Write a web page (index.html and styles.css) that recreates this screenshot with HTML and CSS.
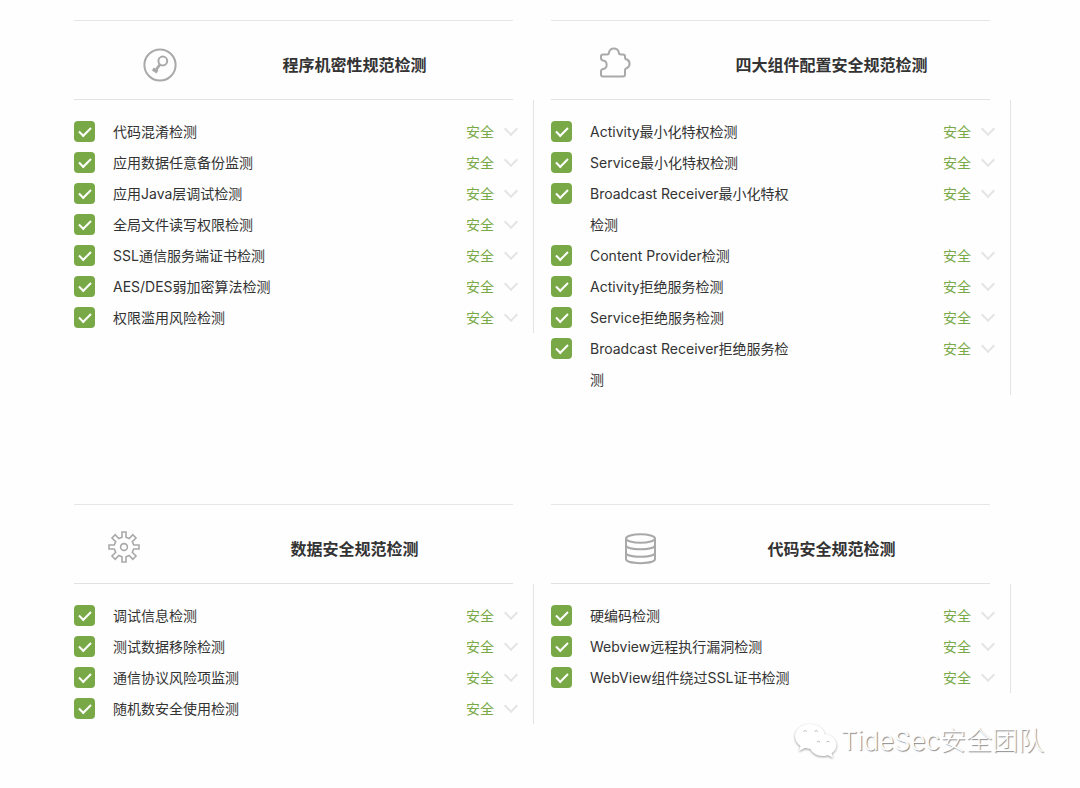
FILE: index.html
```html
<!DOCTYPE html>
<html lang="zh-CN">
<head>
<meta charset="utf-8">
<meta name="viewport" content="width=device-width, initial-scale=1">
<title>安全检测</title>
<link rel="stylesheet" href="styles.css">
</head>
<body>
<main class="report">
  <section class="panel">
    <header class="panel-head">
      <div class="icon-cell icon-cell-key">
        <svg class="icon" viewBox="0 0 34 34" aria-hidden="true">
          <circle cx="17" cy="17" r="15.6"/>
          <circle cx="19.800" cy="13" r="4.400"/>
          <path d="M17 16.500 12.500 22.500" stroke-width="2.800"/>
          <path d="M9.800 21 14.500 24" stroke-width="3.600"/>
        </svg>
      </div>
      <h2 class="title">程序机密性规范检测</h2>
    </header>
    <ul class="checks">
      <li class="check"><input class="box" type="checkbox" id="a1" checked><label class="name" for="a1">代码混淆检测</label><span class="status">安全</span><button class="toggle" type="button" aria-label="展开"></button></li>
      <li class="check"><input class="box" type="checkbox" id="a2" checked><label class="name" for="a2">应用数据任意备份监测</label><span class="status">安全</span><button class="toggle" type="button" aria-label="展开"></button></li>
      <li class="check"><input class="box" type="checkbox" id="a3" checked><label class="name" for="a3">应用Java层调试检测</label><span class="status">安全</span><button class="toggle" type="button" aria-label="展开"></button></li>
      <li class="check"><input class="box" type="checkbox" id="a4" checked><label class="name" for="a4">全局文件读写权限检测</label><span class="status">安全</span><button class="toggle" type="button" aria-label="展开"></button></li>
      <li class="check"><input class="box" type="checkbox" id="a5" checked><label class="name" for="a5">SSL通信服务端证书检测</label><span class="status">安全</span><button class="toggle" type="button" aria-label="展开"></button></li>
      <li class="check"><input class="box" type="checkbox" id="a6" checked><label class="name" for="a6">AES/DES弱加密算法检测</label><span class="status">安全</span><button class="toggle" type="button" aria-label="展开"></button></li>
      <li class="check"><input class="box" type="checkbox" id="a7" checked><label class="name" for="a7">权限滥用风险检测</label><span class="status">安全</span><button class="toggle" type="button" aria-label="展开"></button></li>
    </ul>
  </section>

  <section class="panel">
    <header class="panel-head">
      <div class="icon-cell icon-cell-puzzle">
        <svg class="icon" viewBox="0 0 34 34" aria-hidden="true">
          <path d="M4 8.5H8Q10 8.500 10 6.500A5 5 0 0 1 19.800 6.500Q19.800 8.500 22 8.500H24Q26 8.500 26 10.500V11.500Q26 13.200 28 13.500A4.800 4.800 0 0 1 28 22Q26 22.500 26 24.500V28.500Q26 30.500 24 30.500H4Q2 30.500 2 28.500V25.500Q2 23.500 4 23A4.300 4.300 0 0 0 4 14.500Q2 14 2 12V10.500Q2 8.500 4 8.500Z"/>
        </svg>
      </div>
      <h2 class="title">四大组件配置安全规范检测</h2>
    </header>
    <ul class="checks">
      <li class="check"><input class="box" type="checkbox" id="b1" checked><label class="name" for="b1">Activity最小化特权检测</label><span class="status">安全</span><button class="toggle" type="button" aria-label="展开"></button></li>
      <li class="check"><input class="box" type="checkbox" id="b2" checked><label class="name" for="b2">Service最小化特权检测</label><span class="status">安全</span><button class="toggle" type="button" aria-label="展开"></button></li>
      <li class="check"><input class="box" type="checkbox" id="b3" checked><label class="name" for="b3">Broadcast Receiver最小化特权检测</label><span class="status">安全</span><button class="toggle" type="button" aria-label="展开"></button></li>
      <li class="check"><input class="box" type="checkbox" id="b4" checked><label class="name" for="b4">Content Provider检测</label><span class="status">安全</span><button class="toggle" type="button" aria-label="展开"></button></li>
      <li class="check"><input class="box" type="checkbox" id="b5" checked><label class="name" for="b5">Activity拒绝服务检测</label><span class="status">安全</span><button class="toggle" type="button" aria-label="展开"></button></li>
      <li class="check"><input class="box" type="checkbox" id="b6" checked><label class="name" for="b6">Service拒绝服务检测</label><span class="status">安全</span><button class="toggle" type="button" aria-label="展开"></button></li>
      <li class="check"><input class="box" type="checkbox" id="b7" checked><label class="name" for="b7">Broadcast Receiver拒绝服务检测</label><span class="status">安全</span><button class="toggle" type="button" aria-label="展开"></button></li>
    </ul>
  </section>

  <section class="panel">
    <header class="panel-head">
      <div class="icon-cell icon-cell-gear">
        <svg class="icon" viewBox="0 0 34 34" aria-hidden="true">
          <path stroke-width="1.6" d="M14 2H18V7.2L21.2 8.5 24.8 4.7 28 8 24.3 11.6 25.7 15H31V19H25.7L24.3 22.4 28 26 24.8 29.3 21.2 25.5 18 26.8V32H14V26.8L10.8 25.5 7.2 29.3 4 26 7.7 22.4 6.3 19H1V15H6.3L7.7 11.6 4 8 7.2 4.7 10.8 8.5 14 7.2Z"/>
          <circle cx="16" cy="17" r="3.4" stroke-width="1.6"/>
        </svg>
      </div>
      <h2 class="title">数据安全规范检测</h2>
    </header>
    <ul class="checks">
      <li class="check"><input class="box" type="checkbox" id="c1" checked><label class="name" for="c1">调试信息检测</label><span class="status">安全</span><button class="toggle" type="button" aria-label="展开"></button></li>
      <li class="check"><input class="box" type="checkbox" id="c2" checked><label class="name" for="c2">测试数据移除检测</label><span class="status">安全</span><button class="toggle" type="button" aria-label="展开"></button></li>
      <li class="check"><input class="box" type="checkbox" id="c3" checked><label class="name" for="c3">通信协议风险项监测</label><span class="status">安全</span><button class="toggle" type="button" aria-label="展开"></button></li>
      <li class="check"><input class="box" type="checkbox" id="c4" checked><label class="name" for="c4">随机数安全使用检测</label><span class="status">安全</span><button class="toggle" type="button" aria-label="展开"></button></li>
    </ul>
  </section>

  <section class="panel">
    <header class="panel-head">
      <div class="icon-cell icon-cell-data">
        <svg class="icon" viewBox="0 0 34 34" aria-hidden="true">
          <ellipse cx="16.500" cy="6.500" rx="14.500" ry="4.300"/>
          <path d="M2 6.500V27C2 32.500 31 32.500 31 27V6.500M2 13.200C2 18.500 31 18.500 31 13.200M2 20.800C2 26.200 31 26.200 31 20.800"/>
        </svg>
      </div>
      <h2 class="title">代码安全规范检测</h2>
    </header>
    <ul class="checks">
      <li class="check"><input class="box" type="checkbox" id="d1" checked><label class="name" for="d1">硬编码检测</label><span class="status">安全</span><button class="toggle" type="button" aria-label="展开"></button></li>
      <li class="check"><input class="box" type="checkbox" id="d2" checked><label class="name" for="d2">Webview远程执行漏洞检测</label><span class="status">安全</span><button class="toggle" type="button" aria-label="展开"></button></li>
      <li class="check"><input class="box" type="checkbox" id="d3" checked><label class="name" for="d3">WebView组件绕过SSL证书检测</label><span class="status">安全</span><button class="toggle" type="button" aria-label="展开"></button></li>
    </ul>
  </section>
</main>

<div class="watermark">
  <svg class="wechat" viewBox="0 0 46 38" aria-hidden="true">
    <path d="M17 2C8 2 2 8 2 14.500c0 4 2 7 5.500 9.500L6 29l6-3c2 .6 3.500.7 5 .7 9 0 15-5.500 15-12.200S26 2 17 2Z"/>
    <path d="M30 12c-8 0-13.500 5-13.500 11S22 34 30 34c2 0 3.500-.3 5-.8l5 2.500-1.300-4.500C42 29 43.500 26.200 43.500 23 43.500 17 38 12 30 12Z"/>
    <path class="eyes" d="M10.500 9.500q1.700-2 3.400 0M21.500 9.500q1.700-2 3.400 0M24 20q1.500-1.800 3 0M33.500 20q1.500-1.800 3 0"/>
  </svg>
  <span>TideSec安全团队</span>
</div>
</body>
</html>
```
FILE: styles.css
```css
*,
*::after {
  box-sizing: border-box;
}

body {
  margin: 0;
  min-height: 100vh;
  position: relative;
  background: #fefefe;
  color: #333;
  font-family: Inter, "Noto Sans CJK SC", sans-serif;
  font-size: 14px;
}

.report {
  display: grid;
  grid-template-columns: 1fr 1fr;
  gap: 109px 17px;
  padding: 20px 69px 64px 74px;
}

.panel-head {
  display: grid;
  grid-template-columns: 122px 1fr;
  align-items: center;
  height: 80px;
  margin-right: 21px;
  padding-top: 10px;
  border-top: 1px solid #e6e6e6;
  border-bottom: 1px solid #e2e2e2;
}

.icon-cell {
  display: flex;
}

.icon-cell-key {
  padding-left: 69px;
}

.icon-cell-puzzle {
  padding-left: 48px;
  padding-bottom: 4px;
}

.icon-cell-gear {
  padding-left: 34px;
  padding-bottom: 4px;
}

.icon-cell-data {
  padding-left: 73px;
}

.icon {
  width: 34px;
  height: 34px;
  flex: none;
  fill: none;
  stroke: #a9a9a9;
  stroke-width: 2;
}

.title {
  margin: 0;
  text-align: center;
  font-size: 16px;
  line-height: 24px;
  font-weight: 700;
}

.checks {
  margin: 0;
  padding: 16px 14px 0 0;
  list-style: none;
  border-right: 1px solid #e4e4e4;
}

.check {
  display: grid;
  grid-template-columns: 39px minmax(0, 208px) 1fr 25px;
  align-items: start;
  line-height: 31px;
}

.box {
  appearance: none;
  display: grid;
  place-items: center;
  width: 21px;
  height: 21px;
  margin: 5px 0;
  border-radius: 4px;
  background: #78a946;
}

.box:checked::after {
  content: "";
  width: 12px;
  height: 7px;
  margin-bottom: 3px;
  border: solid #fff;
  border-width: 0 0 2px 2px;
  transform: rotate(-45deg);
}

.status {
  text-align: right;
  color: #78a946;
}

.toggle {
  display: grid;
  place-items: center end;
  height: 31px;
  margin: 0;
  padding: 0 3px 6px 0;
  border: 0;
  background: none;
}

.toggle::after {
  content: "";
  width: 10px;
  height: 10px;
  border: solid #e4e4e4;
  border-width: 0 2px 2px 0;
  transform: rotate(45deg);
}

.watermark {
  position: absolute;
  right: 36px;
  bottom: 27px;
  display: flex;
  align-items: center;
  gap: 2px;
  color: #fff;
  font-family: Inter, "Noto Sans CJK SC", sans-serif;
  font-size: 26px;
  font-weight: 300;
  line-height: 40px;
  text-shadow: 1px 1px 1px #888;
}

.wechat {
  width: 46px;
  height: 38px;
  fill: #fff;
  filter: drop-shadow(0 1px 1px #999);
}

.eyes {
  fill: none;
  stroke: #bbb;
}
```
